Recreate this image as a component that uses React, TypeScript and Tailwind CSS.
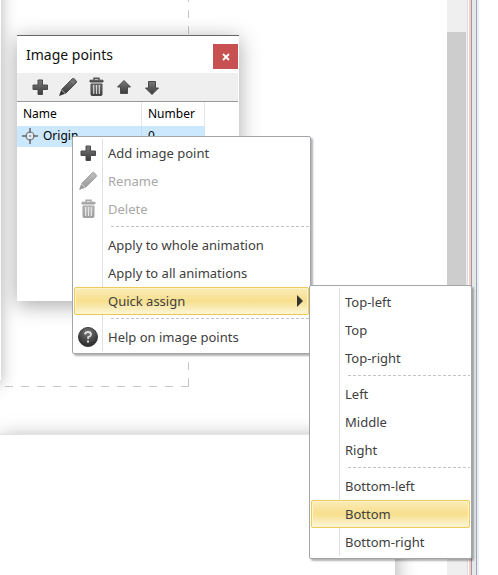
import React from "react";

type IconName = "plus" | "pencil" | "trash" | "up" | "down" | "help";

function Gradients() {
  return (
    <svg className="absolute size-0" aria-hidden="true">
      <defs>
        <linearGradient id="dark" x1="0" y1="0" x2="0" y2="1">
          <stop offset="0" stopColor="#7a7a7a" />
          <stop offset="1" stopColor="#3c3c3c" />
        </linearGradient>
        <radialGradient id="ball" cx="0.5" cy="0.25" r="0.8">
          <stop offset="0" stopColor="#777" />
          <stop offset="1" stopColor="#222" />
        </radialGradient>
      </defs>
    </svg>
  );
}

function Icon({ name }: { name: IconName }) {
  const outline = { fill: "url(#dark)", stroke: "#4a4a4a", strokeWidth: 1, strokeLinejoin: "round" as const };
  return (
    <svg viewBox="0 0 20 20" className="size-5" aria-hidden="true">
      {name === "plus" && (
        <path {...outline} d="M8 3h4.500v5h5v4.500h-5v5H8v-5H3V8h5z" />
      )}
      {name === "pencil" && (
        <>
          <path {...outline} d="M3.600 12.600L14 2Q15.200 0.900 16.400 2L18 3.600Q19.100 4.800 18 6L7.600 16.400z" />
          <path fill="#333" d="M3.200 13L7 16.800L1 19z" />
          <path stroke="#999" strokeWidth="0.8" d="M3.800 12.800L7.300 16.300" />
          <path stroke="#888" strokeWidth="0.8" d="M13 3.500L16.600 7.100" />
        </>
      )}
      {name === "trash" && (
        <>
          <path fill="none" stroke="#555" strokeWidth="1.400" d="M8 3V1.200h5V3" />
          <path {...outline} d="M4 3.200h13v1.800h-13z" />
          <path {...outline} d="M5 7h11v10.500q0 1-1 1h-9q-1 0-1-1z" />
          <path stroke="#d4d4d4" strokeWidth="1.200" d="M7.700 8v9M10.500 8v9M13.300 8v9" />
        </>
      )}
      {name === "up" && <path {...outline} d="M10 3.500L16.500 10H13.500v6.500h-7V10H3.500z" />}
      {name === "down" && <path {...outline} d="M10 17.500L16.500 11H13.500V4.500h-7V11H3.500z" />}
      {name === "help" && (
        <>
          <circle cx="10" cy="10" r="9.500" fill="url(#ball)" stroke="#3a3a3a" />
          <path fill="none" stroke="#ddd" strokeWidth="1.800" d="M7 7.500Q7 5 10 5T13 7.500Q13 9 10.200 10.200V12" />
          <path fill="#ddd" d="M9 13.500h2v2H9z" />
        </>
      )}
    </svg>
  );
}

function OriginIcon() {
  return (
    <svg viewBox="0 0 18 18" className="size-[18px]" aria-hidden="true">
      <circle cx="9" cy="9" r="4" fill="#dfeaf3" stroke="#777" strokeWidth="1.200" />
      <path stroke="#666" strokeWidth="1.500" d="M9 1v5M9 12v5M1 9h5M12 9h5" />
      <circle cx="9" cy="9" r="1" fill="#7894aa" />
    </svg>
  );
}

type Entry = { label: string; icon?: IconName; disabled?: boolean; active?: boolean; submenu?: boolean } | null;

const pointMenu: Entry[] = [
  { label: "Add image point", icon: "plus" },
  { label: "Rename", icon: "pencil", disabled: true },
  { label: "Delete", icon: "trash", disabled: true },
  null,
  { label: "Apply to whole animation" },
  { label: "Apply to all animations" },
  { label: "Quick assign", active: true, submenu: true },
  null,
  { label: "Help on image points", icon: "help" },
];

const assignMenu: Entry[] = [
  { label: "Top-left" },
  { label: "Top" },
  { label: "Top-right" },
  null,
  { label: "Left" },
  { label: "Middle" },
  { label: "Right" },
  null,
  { label: "Bottom-left" },
  { label: "Bottom", active: true },
  { label: "Bottom-right" },
];

function Menu({ entries, className, label }: { entries: Entry[]; className: string; label: string }) {
  return (
    <ul
      role="menu"
      aria-label={label}
      className={`absolute rounded-xs border border-[#a3a5a9] bg-white px-px py-0.5 text-[13px] shadow-[2px_2px_2px_rgba(0,0,0,0.3)] ${className}`}
    >
      <li role="none" className="absolute inset-y-0.5 left-[29px] w-px bg-[#e0e0e0]" />
      {entries.map((entry, i) =>
        entry === null ? (
          <li key={i} role="separator" className="flex h-2 items-start pt-[3px] pl-[37px]">
            <svg className="h-px w-full" aria-hidden="true">
              <line x1="0" y1="0.5" x2="100%" y2="0.5" stroke="#c4c4c4" strokeDasharray="3 2" />
            </svg>
          </li>
        ) : (
          <li key={i} role="none" className="relative">
            <button
              type="button"
              role="menuitem"
              disabled={entry.disabled}
              className={`flex h-7 w-full items-center rounded-xs border text-left ${
                entry.active
                  ? "border-[#eccb58] bg-linear-to-b from-[#fbecb8] via-[#f7df8c] to-[#fdf6d8] shadow-[inset_0_0_0_1px_#fdf3cc]"
                  : "border-transparent"
              } ${entry.disabled ? "text-[#a8a8a8]" : "text-[#404040]"}`}
            >
              <span className={`flex w-[33px] shrink-0 pl-[3px] ${entry.disabled ? "opacity-50" : ""}`}>
                {entry.icon && <Icon name={entry.icon} />}
              </span>
              <span className="flex-1 whitespace-nowrap">{entry.label}</span>
              {entry.submenu && (
                <svg viewBox="0 0 6 12" className="mr-[5px] h-3 w-1.5" aria-hidden="true">
                  <path d="M0 0l6 6-6 6z" fill="#333" />
                </svg>
              )}
            </button>
          </li>
        ),
      )}
    </ul>
  );
}

const tools: { name: IconName; label: string }[] = [
  { name: "plus", label: "Add" },
  { name: "pencil", label: "Rename" },
  { name: "trash", label: "Delete" },
  { name: "up", label: "Move up" },
  { name: "down", label: "Move down" },
];

function PointsDialog() {
  return (
    <section
      aria-label="Image points"
      className="absolute left-[17px] top-[35px] flex h-[266px] w-[222px] flex-col border-t border-[#666] bg-white shadow-[0_4px_20px_rgba(0,0,0,0.35)]"
    >
      <header className="flex h-[37px] items-center justify-between pl-[9px] pr-px">
        <h1 className="text-sm text-[#111]">Image points</h1>
        <button
          type="button"
          aria-label="Close"
          className="mt-1 flex size-[25px] items-center justify-center bg-[#c75050] text-white"
        >
          <svg viewBox="0 0 8 8" className="size-2" aria-hidden="true">
            <path d="M1 1l6 6M7 1L1 7" stroke="currentColor" strokeWidth="1.800" />
          </svg>
        </button>
      </header>
      <div role="toolbar" aria-label="Point tools" className="mr-px flex h-[29px] items-center gap-2 border-b border-[#999] bg-[#efefef] pl-[13px]">
        {tools.map((tool) => (
          <button key={tool.name} type="button" aria-label={tool.label}>
            <Icon name={tool.name} />
          </button>
        ))}
      </div>
      <table className="w-[188px] table-fixed border-separate border-spacing-0 text-left text-xs leading-4 text-black">
        <thead>
          <tr className="h-6">
            <th className="w-[125px] border-r border-[#e5e5e5] pl-1.5 font-normal">Name</th>
            <th className="border-r border-[#e5e5e5] pl-1.5 font-normal">Number</th>
          </tr>
        </thead>
        <tbody>
          <tr className="h-[21px] bg-[#cce8ff]">
            <td className="border-r border-[#c0dff5] pb-0.5 pl-1">
              <span className="flex items-center gap-1">
                <OriginIcon />
                Origin
              </span>
            </td>
            <td className="pb-0.5 pl-1.5">0</td>
          </tr>
        </tbody>
      </table>
    </section>
  );
}

export default function App() {
  return (
    <div className="relative flex h-screen overflow-hidden bg-white font-['Noto_Sans','Open_Sans',sans-serif] text-sm">
      <Gradients />
      <main className="relative min-w-0 flex-1 overflow-hidden">
        <svg className="absolute left-0 top-0 h-[387px] w-[189px]" aria-hidden="true">
          <path d="M188.500 386V0" stroke="#c8c8c8" strokeDasharray="8 8" fill="none" />
          <path d="M189 386.500H5" stroke="#c8c8c8" strokeDasharray="8 8" fill="none" />
        </svg>
        <div className="absolute -left-10 -top-10 h-[420px] w-[41px] bg-white shadow-[0_4px_16px_rgba(0,0,0,0.3)]" />
        <div className="absolute -bottom-10 left-0 right-[52px] top-[434px] border-t border-[#e4e4e4] bg-white shadow-[0_4px_20px_rgba(0,0,0,0.35)]" />
      </main>
      <div className="flex w-5 flex-col bg-[#efefef]">
        <div className="mt-8 h-[480px] w-[19px] bg-[#cdcdcd]" />
      </div>
      <div className="flex w-[31px]">
        <div className="w-px bg-[#dcdcdc]" />
        <div className="w-px bg-white" />
        <div className="w-0.5 bg-[#ffc8c8]" />
        <div className="w-px bg-[#999ea5]" />
        <div className="w-1 bg-[#e4e8e9]" />
        <div className="w-px bg-[#a0a6b2]" />
        <div className="w-0.5 bg-[#e8eef5]" />
      </div>
      <PointsDialog />
      <Menu entries={pointMenu} label="Image point" className="left-[72px] top-[136px] w-[239px]" />
      <Menu entries={assignMenu} label="Quick assign" className="left-[309px] top-[285px] w-[163px]" />
    </div>
  );
}
